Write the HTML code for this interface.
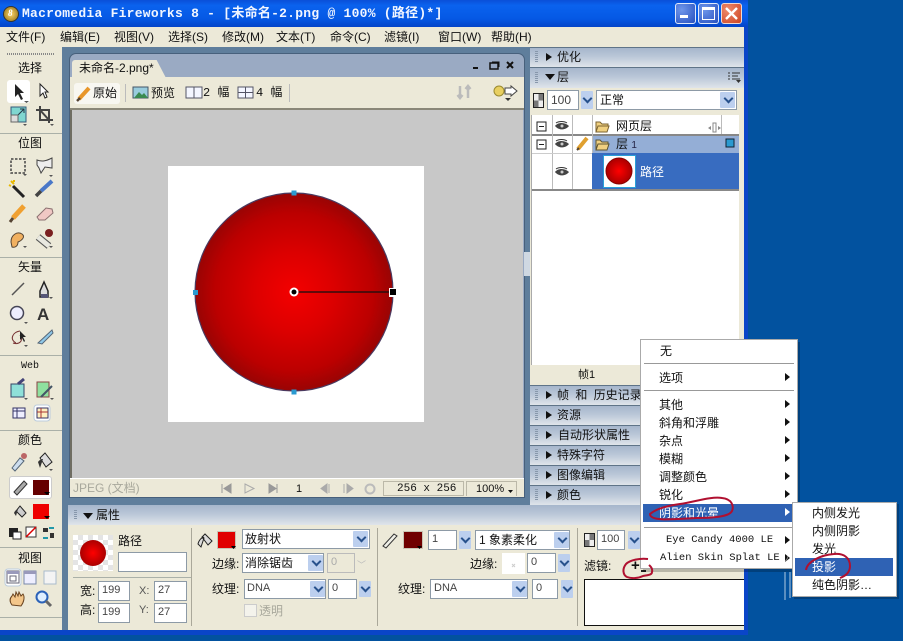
<!DOCTYPE html>
<html><head><meta charset="utf-8">
<style>
html,body{margin:0;padding:0;width:903px;height:641px;overflow:hidden;background:#02529f}
*{box-sizing:border-box}
#w{position:absolute;left:0;top:0;width:903px;height:641px;overflow:hidden;filter:blur(.3px)}
.a,.t,.h,.i,.ar,.s{position:absolute}
.t{white-space:nowrap;font:12px/14px "Liberation Sans","Noto Sans CJK SC",sans-serif;color:#111}
.m{font-family:"Liberation Mono","Noto Sans CJK SC",monospace}
.h{background:linear-gradient(#a6b6cc,#bac7d8 45%,#dfe4ea);border-top:1px solid #5f7488}
.i{background:#fff;border:1px solid #8d9aa6;font:11px/17px "Liberation Sans",sans-serif;color:#444;padding-left:3px;white-space:nowrap}
.ar{background:#bccfee;border-radius:1px}
.ar:after{content:"";position:absolute;left:50%;top:50%;width:5px;height:5px;margin:-5px 0 0 -3px;border-right:2px solid #27518c;border-bottom:2px solid #27518c;transform:rotate(45deg)}
.s{background:#aab0a8;height:1px}
.tri{position:absolute;width:0;height:0;border-top:4px solid transparent;border-bottom:4px solid transparent;border-left:6px solid #111}
.trd{position:absolute;width:0;height:0;border-left:5px solid transparent;border-right:5px solid transparent;border-top:6px solid #111}
.g{position:absolute;width:3px;background:repeating-linear-gradient(#8797ab 0 1px,transparent 1px 2px)}
svg{position:absolute;left:0;top:0}
</style></head><body><div id="w">

<!-- window -->
<div class="a" style="left:0;top:0;width:748px;height:635px;background:#0a45c8"></div>
<div class="a" style="left:0;top:0;width:748px;height:27px;background:linear-gradient(#0a4fd8,#0a62ee 20%,#0558e4 70%,#0444c8)"></div>
<div class="a" style="left:0;top:27px;width:744px;height:20px;background:#ece9d8"></div>
<div class="a" style="left:0;top:47px;width:744px;height:583px;background:#5f7e9c"></div>
<div class="a" style="left:0;top:47px;width:62px;height:583px;background:#ece9d8"></div>

<!-- title -->
<div class="a" style="left:3px;top:6px;width:16px;height:16px;border-radius:50%;background:radial-gradient(#ffd66a,#8a6a10);border:1px solid #333"></div>
<div class="t" style="left:8px;top:8px;font:italic bold 9px/11px 'Liberation Serif',serif;color:#fff">8</div>
<div class="t m" style="left:22px;top:6px;font-size:13px;line-height:16px;font-weight:bold;color:#f2f6ff;letter-spacing:.25px">Macromedia Fireworks 8 - [未命名-2.png @ 100% (路径)*]</div>

<div class="a" style="left:675px;top:3px;width:21px;height:21px;border:1px solid #dfe8fa;border-radius:3px;background:radial-gradient(circle at 30% 30%,#6f96ea,#2650c0)"></div>
<div class="a" style="left:680px;top:15px;width:8px;height:3px;background:#fff"></div>
<div class="a" style="left:698px;top:3px;width:21px;height:21px;border:1px solid #dfe8fa;border-radius:3px;background:radial-gradient(circle at 30% 30%,#6f96ea,#2650c0)"></div>
<div class="a" style="left:702px;top:7px;width:13px;height:13px;border:1px solid #fff;border-top-width:3px"></div>
<div class="a" style="left:721px;top:3px;width:21px;height:21px;border:1px solid #f0d8d0;border-radius:3px;background:radial-gradient(circle at 30% 30%,#ee8a6c,#cc4422)"></div>
<svg width="903" height="641"><path d="M726 8L737 19M737 8L726 19" stroke="#fff" stroke-width="2.4"/></svg>

<!-- menu -->
<div class="t" style="left:6px;top:30px">文件(F)</div>
<div class="t" style="left:60px;top:30px">编辑(E)</div>
<div class="t" style="left:114px;top:30px">视图(V)</div>
<div class="t" style="left:168px;top:30px">选择(S)</div>
<div class="t" style="left:222px;top:30px">修改(M)</div>
<div class="t" style="left:276px;top:30px">文本(T)</div>
<div class="t" style="left:330px;top:30px">命令(C)</div>
<div class="t" style="left:384px;top:30px">滤镜(I)</div>
<div class="t" style="left:438px;top:30px">窗口(W)</div>
<div class="t" style="left:491px;top:30px">帮助(H)</div>

<!-- left toolbar -->
<div class="a" style="left:7px;top:53px;width:47px;height:2px;background:repeating-linear-gradient(90deg,#888 0 1px,transparent 1px 2px)"></div>
<div class="t" style="left:18px;top:61px">选择</div>
<div class="a" style="left:7px;top:80px;width:23px;height:23px;background:#fff;border-radius:3px"></div>
<div class="s" style="left:0;top:133px;width:62px"></div>
<div class="t" style="left:18px;top:136px">位图</div>
<div class="s" style="left:0;top:257px;width:62px"></div>
<div class="t" style="left:18px;top:260px">矢量</div>
<div class="s" style="left:0;top:355px;width:62px"></div>
<div class="t m" style="left:21px;top:360px;font-size:10px">Web</div>
<div class="s" style="left:0;top:430px;width:62px"></div>
<div class="t" style="left:18px;top:433px">颜色</div>
<div class="a" style="left:9px;top:476px;width:43px;height:23px;background:#fff;border-radius:3px;border:1px solid #ccc"></div>
<div class="a" style="left:33px;top:480px;width:16px;height:15px;background:#600"></div>
<div class="a" style="left:33px;top:504px;width:16px;height:15px;background:#e00"></div>
<div class="s" style="left:0;top:547px;width:62px"></div>
<div class="t" style="left:18px;top:551px">视图</div>
<div class="s" style="left:0;top:617px;width:62px"></div>

<svg width="903" height="641">
<!-- select tools -->
<path d="M15 84l0 13 3-3 3 6 2-1-3-6 4 0z" fill="#222"/>
<path d="M40 84l0 12 3-3 2 5 2-1-2-5 3 0z" fill="#fff" stroke="#222"/>
<rect x="11" y="107" width="15" height="15" fill="#7fd6d0" stroke="#33597a"/><path d="M18 115l6-6m-4 0h4v4" stroke="#234" fill="none"/><rect x="11" y="115" width="7" height="7" fill="#ddd" stroke="#666"/>
<path d="M40 106v14h13M36 110h13v13M40 110l9 10" stroke="#444" stroke-width="2" fill="none"/>
<!-- bitmap -->
<rect x="11" y="159" width="14" height="14" fill="none" stroke="#444" stroke-width="1.500" stroke-dasharray="2.500 1.500"/>
<path d="M37 160c5 2 9 1 15-2l0 10-7-1-4 6-2-5-2-3z" fill="#eee" stroke="#444"/>
<path d="M13 186L24 197" stroke="#222" stroke-width="3"/><path d="M11 181l3 3M9 185l2 1M14 180l0 2" stroke="#e8b800" stroke-width="2"/>
<path d="M41 191L52 181" stroke="#4a78c8" stroke-width="4"/><path d="M36 196l5-5" stroke="#444" stroke-width="3.500"/>
<path d="M13 218L24 206" stroke="#f0a030" stroke-width="5"/><path d="M10 222l3-4" stroke="#543" stroke-width="3"/>
<path d="M37 217l9-9 6 1 1 4-8 7-6 0z" fill="#f0c8c4" stroke="#8a7070"/>
<path d="M11 242c0-7 6-11 11-8 4 3-1 7-4 8 0 4-3 6-6 5z" fill="#f0b060" stroke="#543"/>
<path d="M38 237l11 9" stroke="#555" stroke-width="7"/><path d="M38 237l11 9" stroke="#e8e8e0" stroke-width="5"/><circle cx="49" cy="233" r="4" fill="#7a2020"/>
<!-- vector -->
<path d="M12 295L24 283" stroke="#555" stroke-width="1.5"/>
<path d="M44 282l-4 9 0 6h8l0-6z" fill="#ddd" stroke="#222" stroke-width="1.5"/><rect x="41" y="294" width="7" height="4" fill="#557"/>
<circle cx="17" cy="313" r="6.5" fill="#eef" stroke="#445" stroke-width="1.5"/>
<text x="37" y="320" style="font:bold 17px 'Liberation Sans',sans-serif" fill="#333">A</text>
<path d="M16 343c-7-4-3-11 4-12M13 343c6 2 11-2 7-8" stroke="#733" fill="none"/><path d="M20 331l0 9 2-2 2 4 1-1-2-4 3 0z" fill="#222"/>
<path d="M38 343l14-13 1 3-11 11z" fill="#8fc8e8" stroke="#567"/>
<!-- web -->
<rect x="11" y="384" width="13" height="13" fill="#8fe0d8" stroke="#346"/><path d="M18 384l6-5" stroke="#447" stroke-width="3"/>
<rect x="37" y="382" width="12" height="15" fill="#8fe09f" stroke="#844"/><path d="M41 397l11-11" stroke="#456" stroke-width="2"/>
<rect x="13" y="408" width="12" height="10" fill="#eef" stroke="#336"/><path d="M13 411h12M17 408v10" stroke="#336"/>
<rect x="34" y="405" width="16" height="16" rx="3" fill="#fff" stroke="#bcd"/><rect x="37" y="408" width="11" height="10" fill="#fff0c0" stroke="#336"/><path d="M37 412h11M41 408v10" stroke="#a33"/>
<!-- color -->
<path d="M12 468l8-10 4 3-9 10z" fill="#cde" stroke="#567"/><circle cx="24" cy="456" r="3" fill="#b66"/>
<path d="M40 458l5-5 7 9-6 5z" fill="#ddd" stroke="#222"/><path d="M38 462c2-3 5-3 5-3l-3 9z" fill="#333"/>
<path d="M14 492l10-11 3 3-10 11z" fill="#aaa" stroke="#333"/>
<path d="M16 511l4-5 6 7-4 4z" fill="#ccc" stroke="#222"/><path d="M14 513c1-3 4-4 4-4l-2 7z" fill="#333"/>
<path d="M44 492h6l-3 3zM44 516h6l-3 3z" fill="#000"/>
<rect x="9" y="528" width="9" height="9" fill="#222"/><rect x="13" y="532" width="8" height="7" fill="#fff" stroke="#222"/>
<rect x="26" y="527" width="10" height="10" fill="#fff" stroke="#333"/><path d="M26 537l10-10" stroke="#d00" stroke-width="1.5"/>
<path d="M43 528h5v4h-5zM50 533h4v5h-4z" fill="#333"/><path d="M49 528h5M43 538h5" stroke="#29a" stroke-width="2"/>
<!-- view -->
<rect x="5" y="569" width="16" height="17" rx="3" fill="#fff" stroke="#bcd"/><rect x="7" y="571" width="12" height="12" fill="#fff" stroke="#667"/><rect x="7" y="571" width="12" height="3" fill="#99b"/><rect x="10" y="576" width="6" height="5" fill="none" stroke="#667"/>
<rect x="24" y="571" width="12" height="13" fill="#eef" stroke="#78a"/><rect x="24" y="571" width="12" height="3" fill="#99b"/>
<rect x="44" y="571" width="12" height="13" fill="#f4f4f4" stroke="#abc"/>
<path d="M12 605c-3-4-2-7 0-9l1-2 2 3 1-5 2 4 1-4 2 4 2-2c2 3 1 8-2 12z" fill="#f3c68a" stroke="#6a4420"/>
<circle cx="42" cy="597" r="5.5" fill="#dfefff" stroke="#2b62b8" stroke-width="2"/><path d="M46 601l5 5" stroke="#666" stroke-width="3"/>
<!-- small triangles -->
<path d="M24 101h5l-2.500 2zM23 124h4l-2 2zM50 124h4l-2 2zM23 174h4l-2 2zM49 175h4l-2 2zM23 246h4l-2 2zM49 246h4l-2 2zM49 297h4l-2 2zM24 322h4l-2 2zM24 345h4l-2 2zM24 398h4l-2 2zM50 398h4l-2 2zM49 469h4l-2 2z" fill="#555"/>
</svg>

<!-- document window -->
<div class="a" style="left:69px;top:53px;width:456px;height:445px;background:#9aaac3;border-radius:7px 7px 0 0;border:1px solid #47607c;border-bottom:2px solid #47607c"></div>
<div class="a" style="left:70px;top:77px;width:454px;height:33px;background:#ece9d8;border-bottom:2px solid #8a8778"></div>
<div class="a" style="left:72px;top:60px;width:94px;height:18px;background:#ece9d8;border-radius:3px 3px 0 0;clip-path:polygon(0 0,90% 0,100% 100%,0 100%)"></div>
<div class="t" style="left:79px;top:61px">未命名-2.png*</div>
<div class="a" style="left:70px;top:110px;width:453px;height:368px;background:#c8c8c8;border-left:2px solid #6f6d62"></div>
<div class="a" style="left:70px;top:478px;width:454px;height:19px;background:#ece9d8;border-top:1px solid #fff"></div>

<div class="a" style="left:74px;top:83px;width:46px;height:21px;background:#f8f7f1;border-radius:3px"></div>
<div class="t" style="left:93px;top:86px">原始</div>
<div class="t" style="left:151px;top:86px">预览</div>
<div class="t m" style="left:203px;top:86px">2 幅</div>
<div class="t m" style="left:256px;top:86px">4 幅</div>
<div class="a" style="left:125px;top:84px;width:1px;height:18px;background:#bbb"></div>
<div class="a" style="left:289px;top:84px;width:1px;height:18px;background:#bbb"></div>

<svg width="903" height="641">
<path d="M79 99L89 88" stroke="#e8962a" stroke-width="4"/><path d="M77 101l3-3" stroke="#543" stroke-width="2.500"/>
<rect x="133" y="87" width="15" height="11" fill="#9cd" stroke="#456"/><path d="M134 98l5-6 3 3 2-2 4 5z" fill="#3a8a50"/>
<rect x="186" y="87" width="16" height="11" fill="#f4f6ff" stroke="#556"/><path d="M194 87v11" stroke="#556"/>
<rect x="238" y="87" width="15" height="11" fill="#f4f6ff" stroke="#556"/><path d="M245.500 87v11M238 92.500h15" stroke="#556"/>
<path d="M460 86v12m-2.500-3l2.500 3 2.500-3M468 98v-12m-2.500 3l2.500-3 2.500 3" stroke="#bbb" stroke-width="2.500" fill="none"/>
<circle cx="499" cy="91" r="5" fill="#e8cf60" stroke="#9a8a30"/><path d="M505 88h6v-2l6 5-6 5v-2h-6z" fill="#fff" stroke="#444"/><path d="M505 98h6l-3 3z" fill="#333"/>
<path d="M473 68h5" stroke="#111" stroke-width="2"/>
<rect x="490" y="63" width="8" height="6" fill="none" stroke="#111" stroke-width="1.500"/><path d="M492 62h7v5" stroke="#111" fill="none"/>
<path d="M507 62l6 6M513 62l-6 6" stroke="#111" stroke-width="2"/>
</svg>

<!-- canvas -->
<div class="a" style="left:168px;top:166px;width:256px;height:256px;background:#fff"></div>
<svg width="903" height="641">
<defs><radialGradient id="rg" cx="294" cy="292" r="99" gradientUnits="userSpaceOnUse"><stop offset="0" stop-color="#f40000"/><stop offset=".4" stop-color="#dc0000"/><stop offset=".8" stop-color="#bb0000"/><stop offset="1" stop-color="#980404"/></radialGradient>
<radialGradient id="rg2" cx=".5" cy=".5" r=".5"><stop offset="0" stop-color="#f00"/><stop offset="1" stop-color="#a00"/></radialGradient></defs>
<circle cx="294" cy="292" r="99" fill="url(#rg)" stroke="#4a3a60" stroke-width="1.200"/>
<path d="M298 292H393" stroke="#111" stroke-width="1.200"/>
<circle cx="294" cy="292" r="4.500" fill="#fff"/><circle cx="294" cy="292" r="2.500" fill="#000"/>
<rect x="389" y="288" width="9" height="9" fill="#fff"/><rect x="390" y="289" width="6" height="6" fill="#000"/>
<rect x="291.500" y="190.500" width="5" height="5" fill="#2a9ad0"/><rect x="291.500" y="389.500" width="5" height="5" fill="#2a9ad0"/><rect x="193" y="290" width="5" height="5" fill="#2a9ad0"/>
</svg>

<!-- status bar -->
<div class="t" style="left:73px;top:481px;color:#a8a89c">JPEG (文档)</div>
<div class="t" style="left:296px;top:482px;font-size:11px">1</div>
<div class="a" style="left:383px;top:481px;width:81px;height:15px;border:1px solid #bbb8a8"></div>
<div class="a" style="left:466px;top:481px;width:51px;height:15px;border:1px solid #bbb8a8;border-bottom:0"></div>
<div class="t m" style="left:397px;top:482px;font-size:11px">256 x 256</div>
<div class="t" style="left:476px;top:482px;font-size:11px">100%</div>
<svg width="903" height="641">
<path d="M222 484v9M231 484l-7 4.500 7 4.500z" fill="#999" stroke="#999"/>
<path d="M245 484l9 4.500-9 4.500z" fill="none" stroke="#aaa"/>
<path d="M269 484l7 4.500-7 4.500zM277 484v9" fill="#999" stroke="#999"/>
<path d="M327 484l-6 4.500 6 4.500zM329 484v9" fill="#aaa" stroke="#aaa"/>
<path d="M344 484v9M347 484l6 4.500-6 4.500z" fill="#aaa" stroke="#aaa"/>
<circle cx="370" cy="489" r="4.500" fill="none" stroke="#bbb" stroke-width="2"/>
<path d="M508 490h5l-2.500 3z" fill="#111"/>
</svg>

<!-- right panels -->
<div class="a" style="left:530px;top:47px;width:214px;height:458px;background:#ece9d8"></div>
<div class="h" style="left:530px;top:47px;width:214px;height:20px"></div>
<div class="g" style="left:535px;top:51px;height:12px"></div><div class="tri" style="left:546px;top:53px"></div>
<div class="t" style="left:557px;top:50px">优化</div>
<div class="h" style="left:530px;top:67px;width:214px;height:21px"></div>
<div class="g" style="left:535px;top:72px;height:12px"></div><div class="trd" style="left:545px;top:74px"></div>
<div class="t" style="left:557px;top:70px">层</div>
<svg width="903" height="641"><path d="M728 73h2M728 76h2M728 79h2M732 73h8M732 76h6M732 79h8" stroke="#333"/><path d="M736 80h5l-2.500 3z" fill="#333"/></svg>

<div class="a" style="left:533px;top:93px;width:11px;height:15px;background:conic-gradient(#777 25%,#eee 0 50%,#777 0 75%,#eee 0);border:1px solid #222"></div>
<div class="i" style="left:547px;top:90px;width:32px;height:20px;line-height:18px;font-size:12px">100</div>
<div class="ar" style="left:581px;top:91px;width:12px;height:18px"></div>
<div class="i" style="left:596px;top:90px;width:141px;height:20px"></div>
<div class="t" style="left:600px;top:93px">正常</div>
<div class="ar" style="left:720px;top:92px;width:15px;height:16px"></div>

<div class="a" style="left:531px;top:115px;width:208px;height:250px;background:#fff;border-left:1px solid #aaa"></div>
<div class="a" style="left:532px;top:134px;width:207px;height:2px;background:#888"></div>
<div class="a" style="left:592px;top:136px;width:147px;height:17px;background:#94aed6"></div>
<div class="a" style="left:592px;top:153px;width:147px;height:36px;background:#386cc0"></div>
<div class="a" style="left:532px;top:189px;width:207px;height:2px;background:#888"></div>
<div class="a" style="left:552px;top:115px;width:1px;height:74px;background:#bbb"></div>
<div class="a" style="left:572px;top:115px;width:1px;height:74px;background:#bbb"></div>
<div class="a" style="left:592px;top:115px;width:1px;height:38px;background:#bbb"></div>
<div class="a" style="left:532px;top:153px;width:60px;height:1px;background:#ccc"></div>
<div class="a" style="left:721px;top:115px;width:1px;height:19px;background:#bbb"></div>
<div class="t" style="left:616px;top:119px">网页层</div>
<div class="t" style="left:616px;top:137px">层 <span style="font-size:10px;color:#224">1</span></div>
<div class="t" style="left:640px;top:165px;color:#fff">路径</div>
<div class="a" style="left:603px;top:155px;width:33px;height:33px;background:#fff;border:1px solid #2aa0d8"></div>
<svg width="903" height="641">
<rect x="537" y="122" width="9" height="9" fill="none" stroke="#222"/><path d="M539 126.500h5" stroke="#222"/>
<rect x="537" y="140" width="9" height="9" fill="none" stroke="#222"/><path d="M539 144.500h5" stroke="#222"/>
<g><path d="M555 126c3-4 10-4 14 0-3 4-10 5-14 0z" fill="#444"/><path d="M556 123c3-2 8-2 11 0" stroke="#333" fill="none"/><circle cx="562" cy="126" r="1.500" fill="#ccc"/></g>
<path d="M555 144c3-4 10-4 14 0-3 4-10 5-14 0z" fill="#444"/><path d="M556 141c3-2 8-2 11 0" stroke="#333" fill="none"/><circle cx="562" cy="144" r="1.500" fill="#ccc"/>
<path d="M555 172c3-4 10-4 14 0-3 4-10 5-14 0z" fill="#444"/><path d="M556 169c3-2 8-2 11 0" stroke="#333" fill="none"/><circle cx="562" cy="172" r="1.500" fill="#ccc"/>
<path d="M578 149l9-11" stroke="#e0a030" stroke-width="4"/><path d="M577 150l2-2" stroke="#543" stroke-width="2"/>
<path d="M596 122h4l2 2h6v2h-10l-2 6zM596 132l2-6h11l-2 6z" fill="#f0d080" stroke="#7a6230"/>
<path d="M596 140h4l2 2h6v2h-10l-2 6zM596 150l2-6h11l-2 6z" fill="#f0d080" stroke="#5a5230"/>
<path d="M711 126l-3 2 3 2zM718 126l3 2-3 2z" fill="#888"/><rect x="713" y="123" width="3" height="9" fill="none" stroke="#888"/>
<rect x="726" y="139" width="8" height="8" fill="#2a9ad0" stroke="#123"/>
<circle cx="619" cy="171" r="13" fill="url(#rg2)" stroke="#800"/>
</svg>

<div class="a" style="left:530px;top:365px;width:214px;height:20px;background:#ece9d8"></div>
<div class="t" style="left:578px;top:368px;font-size:11px">帧1</div>

<div class="h" style="left:530px;top:385px;width:214px;height:20px"></div>
<div class="g" style="left:535px;top:389px;height:12px"></div><div class="tri" style="left:546px;top:391px"></div>
<div class="t" style="left:557px;top:388px;word-spacing:3px">帧 和 历史记录</div>
<div class="h" style="left:530px;top:405px;width:214px;height:20px"></div>
<div class="g" style="left:535px;top:409px;height:12px"></div><div class="tri" style="left:546px;top:411px"></div>
<div class="t" style="left:557px;top:408px">资源</div>
<div class="h" style="left:530px;top:425px;width:214px;height:20px"></div>
<div class="g" style="left:535px;top:429px;height:12px"></div><div class="tri" style="left:546px;top:431px"></div>
<div class="t" style="left:558px;top:428px">自动形状属性</div>
<div class="h" style="left:530px;top:445px;width:214px;height:20px"></div>
<div class="g" style="left:535px;top:449px;height:12px"></div><div class="tri" style="left:546px;top:451px"></div>
<div class="t" style="left:557px;top:448px">特殊字符</div>
<div class="h" style="left:530px;top:465px;width:214px;height:20px"></div>
<div class="g" style="left:535px;top:469px;height:12px"></div><div class="tri" style="left:546px;top:471px"></div>
<div class="t" style="left:557px;top:468px">图像编辑</div>
<div class="h" style="left:530px;top:485px;width:214px;height:20px"></div>
<div class="g" style="left:535px;top:489px;height:12px"></div><div class="tri" style="left:546px;top:491px"></div>
<div class="t" style="left:557px;top:488px">颜色</div>

<!-- splitter -->
<div class="a" style="left:524px;top:252px;width:6px;height:24px;background:#cfd8e2"></div>

<!-- properties -->
<div class="h" style="left:68px;top:505px;width:676px;height:20px;border-top:0"></div>
<div class="a" style="left:68px;top:525px;width:676px;height:105px;background:#ece9d8"></div>
<div class="g" style="left:74px;top:510px;height:10px"></div>
<div class="trd" style="left:83px;top:513px"></div>
<div class="t" style="left:96px;top:508px">属性</div>

<div class="a" style="left:73px;top:535px;width:40px;height:36px;background:conic-gradient(#e4e4e4 25%,#fff 0 50%,#e4e4e4 0 75%,#fff 0) 0 0/10px 10px"></div>
<svg width="903" height="641"><circle cx="93" cy="553" r="13" fill="url(#rg2)"/></svg>
<div class="t" style="left:118px;top:534px">路径</div>
<div class="i" style="left:118px;top:552px;width:69px;height:20px"></div>
<div class="s" style="left:73px;top:577px;width:118px"></div>
<div class="t" style="left:80px;top:584px">宽:</div>
<div class="i" style="left:98px;top:581px;width:32px;height:20px">199</div>
<div class="t" style="left:139px;top:584px;font-size:11px;color:#555">X:</div>
<div class="i" style="left:154px;top:581px;width:33px;height:20px">27</div>
<div class="t" style="left:80px;top:603px">高:</div>
<div class="i" style="left:98px;top:603px;width:32px;height:20px">199</div>
<div class="t" style="left:139px;top:603px;font-size:11px;color:#555">Y:</div>
<div class="i" style="left:154px;top:603px;width:33px;height:20px">27</div>
<div class="a" style="left:191px;top:528px;width:1px;height:98px;background:#aaa89a"></div>

<div class="a" style="left:217px;top:531px;width:19px;height:18px;background:#e00000;border:1px solid #c8c4b4"></div>
<div class="i" style="left:242px;top:529px;width:128px;height:20px"></div>
<div class="t" style="left:245px;top:532px">放射状</div>
<div class="ar" style="left:353px;top:531px;width:15px;height:16px"></div>
<div class="t" style="left:212px;top:557px">边缘:</div>
<div class="i" style="left:242px;top:553px;width:82px;height:20px"></div>
<div class="t" style="left:245px;top:556px">消除锯齿</div>
<div class="ar" style="left:308px;top:555px;width:15px;height:16px"></div>
<div class="i" style="left:327px;top:553px;width:28px;height:20px;background:#ece9d8;color:#aaa;border-color:#bbb">0</div>
<div class="t" style="left:357px;top:558px;color:#bbb;font-size:9px">﹀</div>
<div class="t" style="left:212px;top:582px">纹理:</div>
<div class="i" style="left:244px;top:579px;width:82px;height:20px;padding-left:2px">DNA</div>
<div class="ar" style="left:310px;top:581px;width:15px;height:16px"></div>
<div class="i" style="left:328px;top:579px;width:29px;height:20px">0</div>
<div class="ar" style="left:359px;top:581px;width:12px;height:16px"></div>
<div class="a" style="left:244px;top:604px;width:13px;height:13px;background:#f4f3ec;border:1px solid #ccc"></div>
<div class="t" style="left:259px;top:604px;color:#a8a89c">透明</div>
<div class="a" style="left:377px;top:528px;width:1px;height:98px;background:#aaa89a"></div>

<div class="a" style="left:403px;top:531px;width:20px;height:18px;background:#700000;border:1px solid #c8c4b4"></div>
<div class="i" style="left:428px;top:530px;width:29px;height:20px">1</div>
<div class="ar" style="left:459px;top:531px;width:12px;height:18px"></div>
<div class="i" style="left:475px;top:530px;width:95px;height:20px"></div>
<div class="t" style="left:479px;top:533px">1 象素柔化</div>
<div class="ar" style="left:554px;top:532px;width:15px;height:16px"></div>
<div class="t" style="left:470px;top:557px">边缘:</div>
<div class="a" style="left:502px;top:553px;width:23px;height:21px;background:#fff"></div>
<div class="i" style="left:527px;top:553px;width:29px;height:20px">0</div>
<div class="ar" style="left:558px;top:554px;width:12px;height:18px"></div>
<div class="t" style="left:398px;top:582px">纹理:</div>
<div class="i" style="left:430px;top:579px;width:98px;height:20px">DNA</div>
<div class="ar" style="left:512px;top:581px;width:15px;height:16px"></div>
<div class="i" style="left:532px;top:579px;width:26px;height:20px">0</div>
<div class="ar" style="left:561px;top:580px;width:12px;height:18px"></div>
<div class="a" style="left:577px;top:528px;width:1px;height:98px;background:#aaa89a"></div>

<div class="a" style="left:584px;top:533px;width:11px;height:14px;background:conic-gradient(#777 25%,#eee 0 50%,#777 0 75%,#eee 0);border:1px solid #222"></div>
<div class="i" style="left:597px;top:530px;width:28px;height:20px">100</div>
<div class="ar" style="left:628px;top:531px;width:12px;height:18px"></div>
<div class="t" style="left:584px;top:559px">滤镜:</div>
<div class="a" style="left:584px;top:579px;width:160px;height:47px;background:#fff;border:1px solid #111;border-right:0"></div>
<div class="t" style="left:631px;top:559px;font-size:15px;font-weight:bold">+</div>
<svg width="903" height="641">
<path d="M208 545l-6-8 3-3 7 7zM198 544c1-5 4-6 5-7l1 1-3 9z" fill="#ddd" stroke="#222"/>
<path d="M231 546h5l-2.500 3zM417 546h5l-2.500 3z" fill="#000"/>
<path d="M383 546l11-12 3 2-11 12z" fill="#f0f0e8" stroke="#333"/>
<path d="M641 571h5" stroke="#222" stroke-width="2"/>
<path d="M512 564l3 3M515 564l-3 3" stroke="#ccc"/>
</svg>

<!-- desktop -->
<div class="a" style="left:748px;top:0;width:155px;height:641px;background:#02529f"></div>
<div class="a" style="left:0;top:635px;width:903px;height:6px;background:#02529f"></div>

<!-- main context menu -->
<div class="a" style="left:643px;top:342px;width:157px;height:230px;background:rgba(0,0,0,.22)"></div>
<div class="a" style="left:640px;top:339px;width:158px;height:230px;background:#fff;border:1px solid #aaa"></div>
<div class="t" style="left:660px;top:344px">无</div>
<div class="s" style="left:644px;top:363px;width:150px;background:#999"></div>
<div class="t" style="left:659px;top:371px">选项</div>
<div class="s" style="left:644px;top:390px;width:150px;background:#999"></div>
<div class="t" style="left:659px;top:398px">其他</div>
<div class="t" style="left:659px;top:416px">斜角和浮雕</div>
<div class="t" style="left:659px;top:434px">杂点</div>
<div class="t" style="left:659px;top:452px">模糊</div>
<div class="t" style="left:659px;top:470px">调整颜色</div>
<div class="t" style="left:659px;top:488px">锐化</div>
<div class="a" style="left:643px;top:504px;width:150px;height:18px;background:#2f62b4"></div>
<div class="t" style="left:659px;top:506px;color:#fff">阴影和光晕</div>
<div class="s" style="left:644px;top:527px;width:150px;background:#999"></div>
<div class="t m" style="left:666px;top:533px;font-size:10.500px">Eye Candy 4000 LE</div>
<div class="t m" style="left:660px;top:551px;font-size:10.500px">Alien Skin Splat LE</div>
<svg width="903" height="641">
<path d="M785 373l5 4-5 4zM785 400l5 4-5 4zM785 418l5 4-5 4zM785 436l5 4-5 4zM785 454l5 4-5 4zM785 472l5 4-5 4zM785 490l5 4-5 4zM785 536l5 4-5 4zM785 554l5 4-5 4z" fill="#111"/>
<path d="M785 508l5 4-5 4z" fill="#fff"/>
</svg>

<!-- watermark traces -->
<svg width="903" height="641" fill="none" stroke="#fff" stroke-opacity=".45">
<circle cx="780" cy="555" r="8"/>
<path d="M785 572v28M790 572v26" stroke-opacity=".35" stroke-width="2"/>
</svg>

<!-- submenu -->
<div class="a" style="left:794px;top:504px;width:105px;height:95px;background:rgba(0,0,0,.22)"></div>
<div class="a" style="left:792px;top:502px;width:105px;height:95px;background:#fff;border:1px solid #aaa"></div>
<div class="t" style="left:812px;top:506px">内侧发光</div>
<div class="t" style="left:812px;top:524px">内侧阴影</div>
<div class="t" style="left:812px;top:542px">发光</div>
<div class="a" style="left:795px;top:558px;width:98px;height:18px;background:#2f62b4"></div>
<div class="t" style="left:812px;top:560px;color:#fff">投影</div>
<div class="t" style="left:812px;top:578px">纯色阴影…</div>

<!-- red scribbles -->
<svg width="903" height="641" fill="none" stroke="#b01030" stroke-width="2">
<path d="M650 514c6-5 15-8 30-10 14-2 32-8 42-6 10 1 12 8 10 13-3 6-20 7-36 7-20 1-46 4-46-4z"/>
<path d="M806 570c1-8 14-15 28-16 10-1 16 4 16 12 0 7-5 10-10 12"/>
<path d="M648 559c-8-1-18 1-22 5-4 5-3 11 1 13 5 2 12 1 16-1 5-1 9-1 9-4 1-4-2-6-3-7"/>
</svg>
</div></body></html>
